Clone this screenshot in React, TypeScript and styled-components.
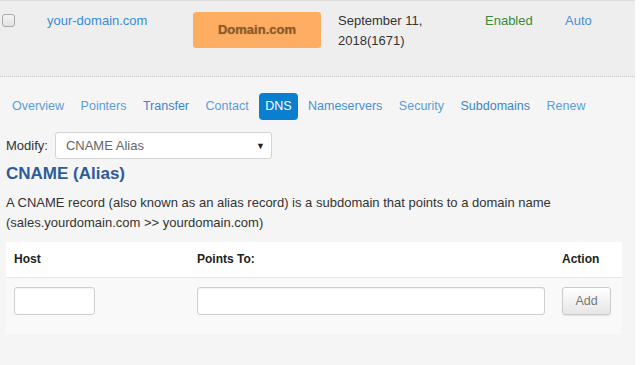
import React from "react";
import styled, { createGlobalStyle } from "styled-components";

const GlobalStyle = createGlobalStyle`
  html, body {
    margin: 0;
    padding: 0;
    background: #ffffff;
  }
  body {
    font-family: "Liberation Sans", Arial, sans-serif;
    color: #333;
  }
`;

const Page = styled.div`
  width: 635px;
  min-height: 365px;
  background: #f5f5f5;
`;

const DomainRow = styled.div`
  display: grid;
  grid-template-columns: 47px 146px 145px 147px 80px 1fr;
  align-items: start;
  height: 65px;
  padding-top: 10px;
  background: #eeeeee;
  border-top: 1px solid #dddddd;
  border-bottom: 1px dotted #c8c8c8;
  font-size: 13px;
  line-height: 20px;
`;

const Check = styled.input`
  appearance: none;
  width: 13px;
  height: 13px;
  margin: 3px 0 0 2px;
  border: 1px solid #a9a9a9;
  border-radius: 3px;
  background: linear-gradient(#f4f4f4, #e2e2e2);
`;

const Link = styled.a<{ $tone?: string }>`
  color: ${(p) => p.$tone || "#3b8bd4"};
  text-decoration: none;
  cursor: pointer;
`;

const Badge = styled.div`
  width: 128px;
  height: 36px;
  margin-top: 1px;
  display: flex;
  align-items: center;
  justify-content: center;
  background: #ffad62;
  border-radius: 3px;
  font-weight: bold;
  font-size: 13px;
  color: #8a5c2c;
  text-shadow: 0 0 1px rgba(90, 55, 20, 0.5);
`;

const Cell = styled.div<{ $color?: string }>`
  color: ${(p) => p.$color || "#333"};
`;

const Panel = styled.div`
  padding: 0 6px;
`;

const Tabs = styled.nav`
  display: flex;
  gap: 4.5px;
  padding-top: 16px;
`;

const Tab = styled.a<{ $active?: boolean; $tone?: string }>`
  height: 27px;
  line-height: 27px;
  padding: 0 6px;
  border-radius: 4px;
  font-size: 12.5px;
  text-decoration: none;
  cursor: pointer;
  background: ${(p) => (p.$active ? "#0a7fcf" : "transparent")};
  color: ${(p) => (p.$active ? "#ffffff" : p.$tone || "#5b9dd9")};
`;

const ModifyRow = styled.div`
  display: flex;
  align-items: center;
  gap: 7px;
  margin-top: 12px;
  font-size: 13px;
  color: #333;
`;

const Select = styled.div`
  width: 217px;
  height: 27px;
  box-sizing: border-box;
  display: flex;
  align-items: center;
  justify-content: space-between;
  padding: 0 6px 0 10px;
  background: #fff;
  border: 1px solid #d4d4d4;
  border-radius: 3px;
  font-size: 13px;
  color: #666;
`;

const Caret = styled.span`
  font-size: 9px;
  color: #222;
`;

const Heading = styled.h2`
  margin: 4px 0 0;
  font-size: 17px;
  line-height: 22px;
  font-weight: bold;
  color: #2e5c9b;
`;

const Description = styled.p`
  margin: 8px 0 0;
  font-size: 13px;
  line-height: 20px;
  color: #333;
`;

const Table = styled.div`
  margin-top: 9px;
  width: 616px;
  display: grid;
  grid-template-columns: 183px 365px 1fr;
`;

const HeadCell = styled.div`
  height: 36px;
  box-sizing: border-box;
  line-height: 35px;
  padding-left: 8px;
  background: #ffffff;
  border-bottom: 1px solid #e8e8e8;
  font-size: 12px;
  font-weight: bold;
  color: #222;
`;

const BodyCell = styled.div`
  height: 56px;
  padding: 9px 0 0 8px;
  box-sizing: border-box;
  background: #f9f9f9;
`;

const TextInput = styled.input<{ $width: number }>`
  width: ${(p) => p.$width}px;
  height: 28px;
  box-sizing: border-box;
  margin: 0;
  border: 1px solid #cfcfcf;
  border-radius: 3px;
  background: #fff;
  box-shadow: inset 0 1px 1px rgba(0, 0, 0, 0.05);
`;

const AddButton = styled.button`
  width: 49px;
  height: 28px;
  margin: 0;
  border: 1px solid #cccccc;
  border-radius: 3px;
  background: linear-gradient(#ffffff, #e6e6e6);
  box-shadow: 0 1px 1px rgba(0, 0, 0, 0.08);
  font-family: "Liberation Sans", Arial, sans-serif;
  font-size: 12.5px;
  color: #777;
  cursor: pointer;
`;

const tabs: { label: string; tone?: string; active?: boolean }[] = [
  { label: "Overview" },
  { label: "Pointers" },
  { label: "Transfer", tone: "#3a86cc" },
  { label: "Contact" },
  { label: "DNS", active: true },
  { label: "Nameservers", tone: "#4a90d2" },
  { label: "Security" },
  { label: "Subdomains", tone: "#3a86cc" },
  { label: "Renew" },
];

export default function App() {
  return (
    <>
      <GlobalStyle />
      <Page>
        <DomainRow>
          <div>
            <Check type="checkbox" />
          </div>
          <Cell>
            <Link>your-domain.com</Link>
          </Cell>
          <Badge>Domain.com</Badge>
          <Cell>
            September 11,
            <br />
            2018(1671)
          </Cell>
          <Cell $color="#3c8a3c">Enabled</Cell>
          <Cell>
            <Link $tone="#4a90d6">Auto</Link>
          </Cell>
        </DomainRow>
        <Panel>
          <Tabs>
            {tabs.map((t) => (
              <Tab key={t.label} $active={t.active} $tone={t.tone}>
                {t.label}
              </Tab>
            ))}
          </Tabs>
          <ModifyRow>
            Modify:
            <Select>
              CNAME Alias
              <Caret>▼</Caret>
            </Select>
          </ModifyRow>
          <Heading>CNAME (Alias)</Heading>
          <Description>
            A CNAME record (also known as an alias record) is a subdomain that
            points to a domain name
            <br />
            (sales.yourdomain.com &gt;&gt; yourdomain.com)
          </Description>
          <Table>
            <HeadCell>Host</HeadCell>
            <HeadCell>Points To:</HeadCell>
            <HeadCell>Action</HeadCell>
            <BodyCell>
              <TextInput $width={81} />
            </BodyCell>
            <BodyCell>
              <TextInput $width={348} />
            </BodyCell>
            <BodyCell>
              <AddButton>Add</AddButton>
            </BodyCell>
          </Table>
        </Panel>
      </Page>
    </>
  );
}
